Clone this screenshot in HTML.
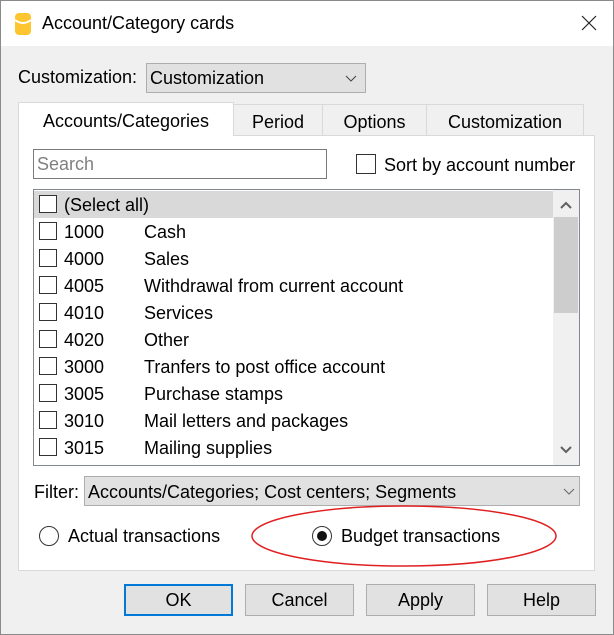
<!DOCTYPE html>
<html><head><style>
body{margin:0;width:614px;height:635px;overflow:hidden;font-family:"Liberation Sans",sans-serif;font-size:18px;color:#000}
.win{position:absolute;left:0;top:0;width:612px;height:633px;border:1px solid #8a8a8a;background:#f0f0f0}
.title{position:absolute;left:0;top:0;width:612px;height:45px;background:#fff}
.a{position:absolute;white-space:nowrap}
.combo{position:absolute;background:#e1e1e1;border:1px solid #adadad;box-sizing:border-box}
.cb{position:absolute;width:18px;height:18px;border:1px solid #333;background:#fff;box-sizing:border-box}
.btn{position:absolute;top:583px;width:109px;height:32px;background:#e1e1e1;border:1px solid #adadad;box-sizing:border-box;text-align:center;line-height:30px}
.tab{position:absolute;top:103px;height:31px;background:#f0f0f0;border:1px solid #d9d9d9;border-bottom:none;box-sizing:border-box;text-align:center;line-height:34px}
</style></head><body>
<div class="win">
<div class="title"></div>
<svg class="a" style="left:13px;top:11px" width="20" height="24"><rect x="1" y="1" width="16" height="22" rx="4" fill="#fdc631"/><path d="M1 8 Q9 14 17 8" stroke="#fff" stroke-width="2" fill="none"/></svg>
<div class="a" style="left:41px;top:12px;font-size:18px">Account/Category cards</div>
<svg class="a" style="left:580px;top:14px" width="16" height="16"><path d="M1 1L15 15M15 1L1 15" stroke="#222" stroke-width="1.2"/></svg>
<div class="a" style="left:17px;top:66px">Customization:</div>
<div class="combo" style="left:145px;top:62px;width:220px;height:30px"><span class="a" style="left:3px;top:4px">Customization</span><svg class="a" style="left:198px;top:11px" width="12" height="8"><path d="M1 1L6 6L11 1" stroke="#444" fill="none"/></svg></div>
<div class="a" style="left:17px;top:134px;width:577px;height:436px;background:#fff;border:1px solid #d9d9d9;box-sizing:border-box"></div>
<div class="tab" style="left:17px;top:101px;width:216px;height:34px;background:#fff;line-height:36px;border-color:#d9d9d9">Accounts/Categories</div>
<div class="tab" style="left:232px;width:90px">Period</div>
<div class="tab" style="left:321px;width:105px">Options</div>
<div class="tab" style="left:425px;width:158px">Customization</div>
<div class="a" style="left:32px;top:148px;width:294px;height:30px;border:1px solid #7a7a7a;box-sizing:border-box;color:#808080;padding:4px 0 0 3px">Search</div>
<div class="cb" style="left:355px;top:153px;width:20px;height:20px"></div>
<div class="a" style="left:383px;top:154px">Sort by account number</div>
<div class="a" style="left:32px;top:188px;width:547px;height:277px;border:1px solid #828790;box-sizing:border-box;background:#fff"></div>
<div class="a" style="left:33px;top:190px;width:519px;height:27px;background:#d9d9d9"></div>
<div class="a" style="left:552px;top:189px;width:26px;height:275px;background:#f0f0f0"></div>
<div class="a" style="left:553px;top:216px;width:24px;height:96px;background:#cdcdcd"></div>
<svg class="a" style="left:558px;top:199px" width="14" height="10"><path d="M2 8L7 3L12 8" stroke="#606060" stroke-width="2" fill="none"/></svg>
<svg class="a" style="left:558px;top:444px" width="14" height="10"><path d="M2 2L7 7L12 2" stroke="#606060" stroke-width="2" fill="none"/></svg>
<div class="cb" style="left:38px;top:194px"></div><div class="a" style="left:63px;top:194px">(Select all)</div>
<div class="cb" style="left:38px;top:221px"></div><div class="a" style="left:63px;top:221px">1000</div><div class="a" style="left:143px;top:221px">Cash</div>
<div class="cb" style="left:38px;top:248px"></div><div class="a" style="left:63px;top:248px">4000</div><div class="a" style="left:143px;top:248px">Sales</div>
<div class="cb" style="left:38px;top:275px"></div><div class="a" style="left:63px;top:275px">4005</div><div class="a" style="left:143px;top:275px">Withdrawal from current account</div>
<div class="cb" style="left:38px;top:302px"></div><div class="a" style="left:63px;top:302px">4010</div><div class="a" style="left:143px;top:302px">Services</div>
<div class="cb" style="left:38px;top:329px"></div><div class="a" style="left:63px;top:329px">4020</div><div class="a" style="left:143px;top:329px">Other</div>
<div class="cb" style="left:38px;top:356px"></div><div class="a" style="left:63px;top:356px">3000</div><div class="a" style="left:143px;top:356px">Tranfers to post office account</div>
<div class="cb" style="left:38px;top:383px"></div><div class="a" style="left:63px;top:383px">3005</div><div class="a" style="left:143px;top:383px">Purchase stamps</div>
<div class="cb" style="left:38px;top:410px"></div><div class="a" style="left:63px;top:410px">3010</div><div class="a" style="left:143px;top:410px">Mail letters and packages</div>
<div class="cb" style="left:38px;top:437px"></div><div class="a" style="left:63px;top:437px">3015</div><div class="a" style="left:143px;top:437px">Mailing supplies</div>
<div class="a" style="left:33px;top:481px">Filter:</div>
<div class="combo" style="left:83px;top:475px;width:496px;height:30px"><span class="a" style="left:3px;top:5px">Accounts/Categories; Cost centers; Segments</span><svg class="a" style="left:478px;top:11px" width="12" height="8"><path d="M1 1L6 6L11 1" stroke="#666" fill="none"/></svg></div>
<svg class="a" style="left:36px;top:523px" width="24" height="24"><circle cx="12" cy="12" r="9.5" fill="#fff" stroke="#333"/></svg>
<div class="a" style="left:67px;top:525px">Actual transactions</div>
<svg class="a" style="left:249px;top:500px" width="312" height="70"><ellipse cx="154" cy="35" rx="152" ry="30" fill="none" stroke="#e02020" stroke-width="1.5"/></svg>
<svg class="a" style="left:309px;top:523px" width="24" height="24"><circle cx="12" cy="12" r="9.5" fill="#fff" stroke="#333"/><circle cx="12" cy="12" r="5" fill="#111"/></svg>
<div class="a" style="left:340px;top:525px">Budget transactions</div>
<div class="btn" style="left:123px;border:2px solid #0078d7;line-height:28px">OK</div>
<div class="btn" style="left:244px">Cancel</div>
<div class="btn" style="left:365px">Apply</div>
<div class="btn" style="left:486px">Help</div>
</div>
</body></html>
